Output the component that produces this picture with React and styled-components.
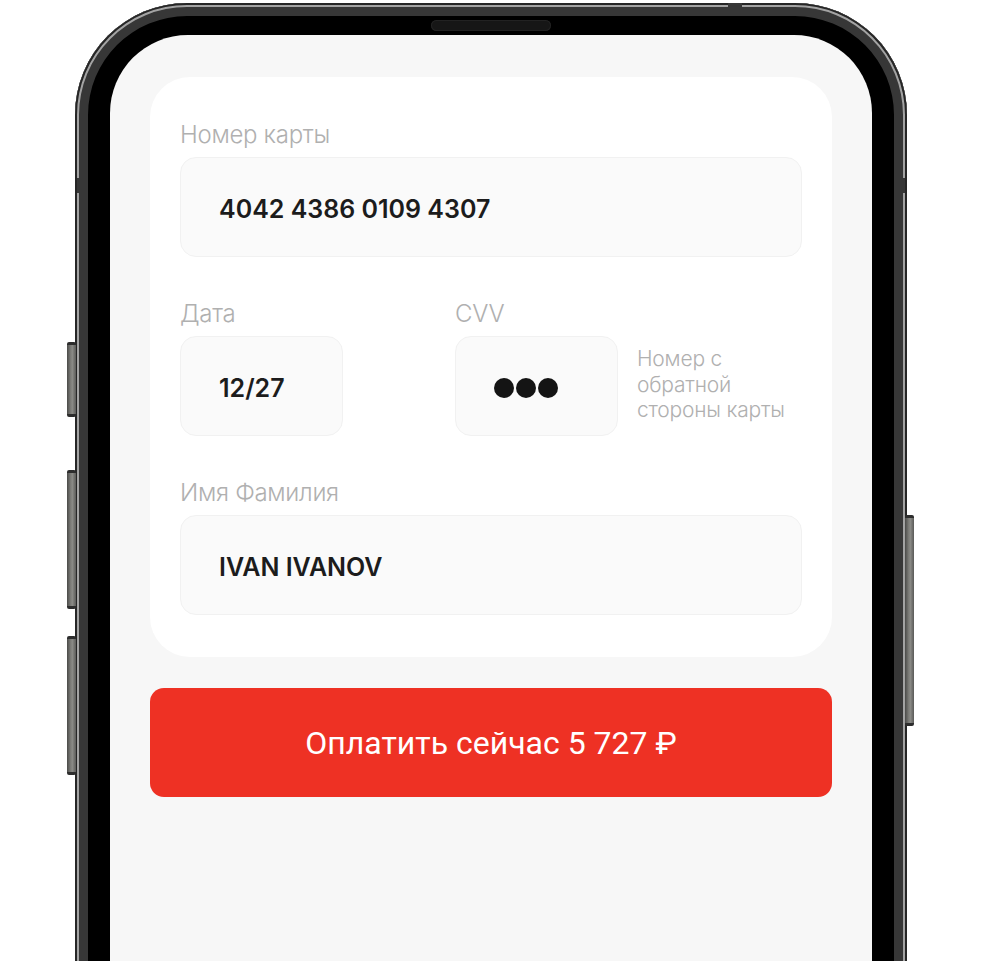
import styled, { createGlobalStyle } from "styled-components";

const GlobalStyle = createGlobalStyle`
  html, body {
    margin: 0;
    padding: 0;
    background: #ffffff;
  }
  * { box-sizing: border-box; }
`

const Page = styled.div`
  width: 983px;
  height: 961px;
  overflow: hidden;
  background: #ffffff;
  padding: 3px 0 0 75px;
`

const Phone = styled.div`
  position: relative;
  width: 832px;
  height: 1100px;
  border-radius: 112px;
  background: #000;
  padding: 32px 35px 0 35px;
  box-shadow:
    inset 0 0 0 2px #262626,
    inset 0 0 0 4px #a3a3a3,
    inset 0 0 0 13px #373737;
`

const SideButton = styled.div`
  position: absolute;
  top: ${(p) => p.$top}px;
  height: ${(p) => p.$h}px;
  ${(p) => (p.$right ? "right: -7px;" : "left: -8px;")}
  width: 9px;
  border-radius: 2px;
  background: linear-gradient(90deg, #4a4a48, #7b7b77 40%, #8a8a86 60%, #5a5a58);
  border-top: 3px solid #2d2d2d;
  border-bottom: 3px solid #2d2d2d;
`

const Band = styled.div`
  position: absolute;
  background: #373737;
  ${(p) => p.$css}
`

const Speaker = styled.div`
  position: absolute;
  top: 17px;
  left: 356px;
  width: 120px;
  height: 11px;
  border-radius: 6px;
  background: #161616;
  box-shadow: inset 0 0 0 1px #222;
`

const Screen = styled.div`
  height: 100%;
  border-radius: 78px 78px 0 0;
  background: #f7f7f7;
  padding: 42px 40px 0 40px;
  font-family: Inter, "Noto Sans", sans-serif;
`

const Card = styled.div`
  background: #ffffff;
  border-radius: 40px;
  padding: 44px 30px 42px 30px;
  display: flex;
  flex-direction: column;
  gap: 43px;
`

const Field = styled.div`
  display: flex;
  flex-direction: column;
  gap: 8px;
`

const Label = styled.div`
  font-size: 24px;
  line-height: 28px;
  font-weight: 300;
  color: #b0b0b0;
  letter-spacing: -0.3px;
`

const Input = styled.div`
  height: 100px;
  width: ${(p) => (p.$w ? `${p.$w}px` : "100%")};
  background: #fafafa;
  border: 1px solid #f1f1f1;
  border-radius: 16px;
  padding: 4px 38px 0 38px;
  display: flex;
  align-items: center;
  font-size: 25px;
  font-weight: 600;
  color: #1c1c1c;
`

const Row = styled.div`
  display: grid;
  grid-template-columns: 275px 1fr;
`

const CvvLine = styled.div`
  display: flex;
  align-items: center;
  gap: 19px;
`

const Dots = styled.div`
  display: flex;
  gap: 2px;
`

const Dot = styled.span`
  width: 20px;
  height: 20px;
  border-radius: 50%;
  background: #141414;
`

const Hint = styled.div`
  font-size: 21px;
  line-height: 25.5px;
  font-weight: 300;
  color: #b0b0b0;
  letter-spacing: -0.2px;
  margin-top: -3px;
`

const PayButton = styled.button`
  margin-top: 31px;
  width: 100%;
  height: 109px;
  border: none;
  border-radius: 14px;
  background: #ee3124;
  color: #ffffff;
  font-family: Roboto, "Noto Sans", sans-serif;
  font-size: 32px;
  font-weight: 400;
  cursor: pointer;
`

const App = () => {
  return (
    <Page>
      <GlobalStyle />
      <Phone>
        <SideButton $top={339} $h={75} />
        <SideButton $top={467} $h={139} />
        <SideButton $top={633} $h={139} />
        <SideButton $right $top={512} $h={211} />
        <Band $css="left: 2px; top: 175px; width: 5px; height: 15px;" />
        <Band $css="right: 2px; top: 175px; width: 5px; height: 15px;" />
        <Band $css="left: 653px; top: 0; width: 14px; height: 5px;" />
        <Speaker />
        <Screen>
          <Card>
            <Field>
              <Label>Номер карты</Label>
              <Input>4042 4386 0109 4307</Input>
            </Field>
            <Row>
              <Field>
                <Label>Дата</Label>
                <Input $w={163}>12/27</Input>
              </Field>
              <Field>
                <Label>CVV</Label>
                <CvvLine>
                  <Input $w={163}>
                    <Dots>
                      <Dot />
                      <Dot />
                      <Dot />
                    </Dots>
                  </Input>
                  <Hint>
                    Номер с<br />
                    обратной<br />
                    стороны карты
                  </Hint>
                </CvvLine>
              </Field>
            </Row>
            <Field>
              <Label>Имя Фамилия</Label>
              <Input>IVAN IVANOV</Input>
            </Field>
          </Card>
          <PayButton>Оплатить сейчас 5 727 ₽</PayButton>
        </Screen>
      </Phone>
    </Page>
  )
}

export default App
